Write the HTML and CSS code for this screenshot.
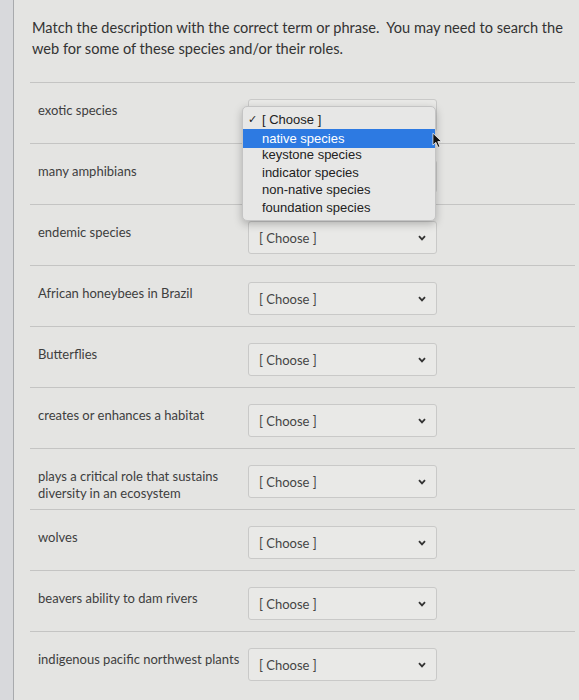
FILE: index.html
```html
<!DOCTYPE html>
<html>
<head>
<meta charset="utf-8">
<link rel="stylesheet" href="styles.css">
</head>
<body>
<div class="card">
  <p class="prompt">Match the description with the correct term or phrase.&nbsp; You may need to search the web for some of these species and/or their roles.</p>
  <div class="rows">
    <div class="row">
      <div class="label">exotic species</div>
      <div class="select-wrap open">
        <div class="select"><span>[ Choose ]</span><svg class="chev" viewBox="0 0 8 6"><path d="M1 1.2 L4 4.4 L7 1.2" /></svg></div>
        <div class="menu">
          <div class="item checked"><span class="check">✓</span>[ Choose ]</div>
          <div class="item active">native species</div>
          <div class="item">keystone species</div>
          <div class="item">indicator species</div>
          <div class="item">non-native species</div>
          <div class="item">foundation species</div>
          <svg class="cursor" viewBox="0 0 12 18"><path d="M1 1 L1 14 L4.2 11 L6.6 16.5 L8.6 15.6 L6.3 10.2 L10.5 10.2 Z" fill="#111" stroke="#fff" stroke-width="0.8"/></svg>
        </div>
      </div>
    </div>
    <div class="row">
      <div class="label">many amphibians</div>
      <div class="select-wrap"><div class="select"><span>[ Choose ]</span><svg class="chev" viewBox="0 0 8 6"><path d="M1 1.2 L4 4.4 L7 1.2" /></svg></div></div>
    </div>
    <div class="row">
      <div class="label">endemic species</div>
      <div class="select-wrap"><div class="select"><span>[ Choose ]</span><svg class="chev" viewBox="0 0 8 6"><path d="M1 1.2 L4 4.4 L7 1.2" /></svg></div></div>
    </div>
    <div class="row">
      <div class="label">African honeybees in Brazil</div>
      <div class="select-wrap"><div class="select"><span>[ Choose ]</span><svg class="chev" viewBox="0 0 8 6"><path d="M1 1.2 L4 4.4 L7 1.2" /></svg></div></div>
    </div>
    <div class="row">
      <div class="label">Butterflies</div>
      <div class="select-wrap"><div class="select"><span>[ Choose ]</span><svg class="chev" viewBox="0 0 8 6"><path d="M1 1.2 L4 4.4 L7 1.2" /></svg></div></div>
    </div>
    <div class="row">
      <div class="label">creates or enhances a habitat</div>
      <div class="select-wrap"><div class="select"><span>[ Choose ]</span><svg class="chev" viewBox="0 0 8 6"><path d="M1 1.2 L4 4.4 L7 1.2" /></svg></div></div>
    </div>
    <div class="row">
      <div class="label">plays a critical role that sustains diversity in an ecosystem</div>
      <div class="select-wrap"><div class="select"><span>[ Choose ]</span><svg class="chev" viewBox="0 0 8 6"><path d="M1 1.2 L4 4.4 L7 1.2" /></svg></div></div>
    </div>
    <div class="row">
      <div class="label">wolves</div>
      <div class="select-wrap"><div class="select"><span>[ Choose ]</span><svg class="chev" viewBox="0 0 8 6"><path d="M1 1.2 L4 4.4 L7 1.2" /></svg></div></div>
    </div>
    <div class="row">
      <div class="label">beavers ability to dam rivers</div>
      <div class="select-wrap"><div class="select"><span>[ Choose ]</span><svg class="chev" viewBox="0 0 8 6"><path d="M1 1.2 L4 4.4 L7 1.2" /></svg></div></div>
    </div>
    <div class="row">
      <div class="label">indigenous pacific northwest plants</div>
      <div class="select-wrap"><div class="select"><span>[ Choose ]</span><svg class="chev" viewBox="0 0 8 6"><path d="M1 1.2 L4 4.4 L7 1.2" /></svg></div></div>
    </div>
  </div>
</div>
</body>
</html>
```

FILE: styles.css
```css
html, body {
  margin: 0;
  padding: 0;
}
body {
  background: #d8d9dc;
  font-family: Lato, "Liberation Sans", sans-serif;
  color: #3b3b3b;
  height: 700px;
  overflow: hidden;
}
.card {
  margin-left: 13px;
  border-left: 1px solid #a8aaad;
  background: #e4e4e2;
  min-height: 700px;
  padding: 17px 4px 0 18px;
}
.prompt {
  margin: 0;
  font-size: 14.6px;
  line-height: 21px;
  color: #333;
}
.rows {
  margin-top: 23px;
  margin-left: -2px;
}
.row {
  display: flex;
  align-items: flex-start;
  border-top: 1px solid #c4c4c3;
  height: 60px;
  padding-left: 8px;
}
.label {
  width: 210px;
  flex: none;
  font-size: 13px;
  line-height: 17px;
  padding-top: 19px;
  color: #3e3e3e;
}
.select-wrap {
  position: relative;
  padding-top: 16px;
}
.select-wrap.open {
  z-index: 5;
}
.select {
  box-sizing: border-box;
  width: 189px;
  height: 33px;
  border: 1px solid #c9c9c8;
  border-radius: 3px;
  background: #e9e9e7;
  display: flex;
  align-items: center;
  justify-content: space-between;
  padding: 0 10px 0 10px;
  font-size: 13px;
  color: #454545;
}
.chev {
  width: 8px;
  height: 6px;
  fill: none;
  stroke: #333;
  stroke-width: 1.8;
}
.menu {
  position: absolute;
  top: 23px;
  left: -6px;
  width: 192px;
  padding: 4px 0;
  background: #e7e7e6;
  border: 1px solid #c4c4c4;
  border-radius: 5px;
  box-shadow: 0 3px 8px rgba(0, 0, 0, 0.25);
  font-family: "Liberation Sans", Arial, sans-serif;
  font-size: 13px;
  color: #222;
}
.item {
  position: relative;
  height: 17.5px;
  line-height: 17.5px;
  padding-left: 19px;
}
.item.active {
  background: #2d7ae2;
  color: #fff;
  height: 19px;
  line-height: 19px;
  margin-bottom: -1.5px;
}
.check {
  position: absolute;
  left: 5px;
  top: 0;
  font-size: 11px;
}
.cursor {
  position: absolute;
  right: -8px;
  top: 25px;
  width: 11px;
  height: 17px;
}
```
